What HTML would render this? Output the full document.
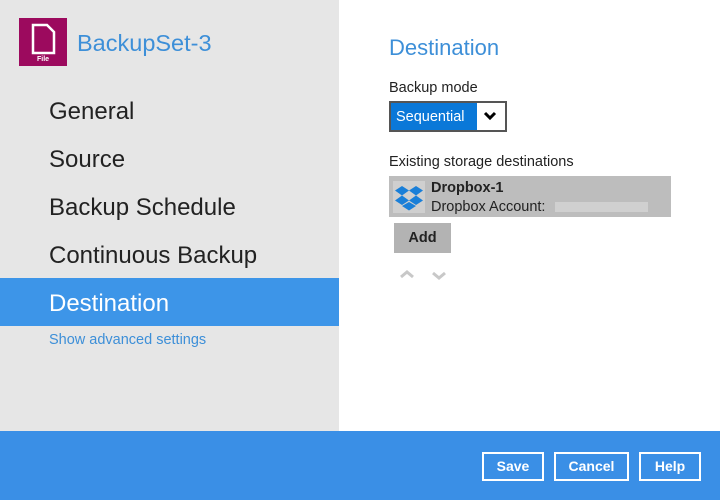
<!DOCTYPE html>
<html><head><style>
*{margin:0;padding:0;box-sizing:border-box}
body{width:720px;height:500px;position:relative;overflow:hidden;font-family:"Liberation Sans",sans-serif;background:#fff}
.left{position:absolute;left:0;top:0;width:339px;height:431px;background:#e6e6e6}
.abs{position:absolute;white-space:nowrap}
.nav{position:absolute;left:49px;font-size:24px;color:#222;line-height:48px}
.bar{position:absolute;left:0;top:431px;width:720px;height:69px;background:#3a8fe6}
.btn{position:absolute;top:452px;height:29px;border:2px solid #fff;color:#fff;font-size:14px;font-weight:bold;text-align:center;line-height:25px}
.t{font-size:14.5px;color:#222}
</style></head><body>
<div class="left"></div>
<div class="abs" style="left:19px;top:18px;width:48px;height:48px;background:#9c0a5e">
<svg width="48" height="48"><path d="M14 7h14l7 7v21H14z" fill="none" stroke="#fff" stroke-width="2.5"/><text x="24" y="43" font-size="7" fill="#fff" text-anchor="middle" font-family="Liberation Sans" font-weight="bold">File</text></svg></div>
<div class="abs" style="left:77px;top:30px;font-size:23.5px;color:#3d8fd8">BackupSet-3</div>
<div class="nav" style="top:88px">General</div>
<div class="nav" style="top:136px">Source</div>
<div class="nav" style="top:184px">Backup Schedule</div>
<div class="nav" style="top:232px">Continuous Backup</div>
<div class="abs" style="left:0;top:278px;width:339px;height:48px;background:#3d95e8"></div>
<div class="nav" style="top:280px;color:#fff">Destination</div>
<div class="abs" style="left:49px;top:332px;font-size:14.5px;color:#3d8fd8">Show advanced settings</div>
<div class="abs" style="left:389px;top:35px;font-size:22px;color:#3d8fd8">Destination</div>
<div class="abs t" style="left:389px;top:80px">Backup mode</div>
<div class="abs" style="left:389px;top:101px;width:118px;height:31px;border:2px solid #555;background:#fff"></div>
<div class="abs" style="left:391px;top:103px;width:86px;height:27px;background:#0a78d8;color:#fff;font-size:14.5px;line-height:28px;padding-left:5px">Sequential</div>
<svg class="abs" style="left:483px;top:110px" width="14" height="12"><path d="M2 3l5 5 5-5" fill="none" stroke="#000" stroke-width="3"/></svg>
<div class="abs t" style="left:389px;top:154px">Existing storage destinations</div>
<div class="abs" style="left:389px;top:176px;width:282px;height:41px;background:#bdbdbd"></div>
<div class="abs" style="left:393px;top:181px;width:32px;height:32px;background:#cfcfcf">
<svg width="32" height="32"><path d="M9 5l7 4.5-7 5-7-5zM23 5l7 4.5-7 5-7-5zM9 14.5l7 5-7 4.5-7-4.5zM23 14.5l7 5-7 4.5-7-4.5zM9 25l7-4 7 4-7 4.5z" fill="#1a7fd8"/></svg></div>
<div class="abs" style="left:431px;top:180px;font-size:14.5px;font-weight:bold;color:#222">Dropbox-1</div>
<div class="abs t" style="left:431px;top:199px">Dropbox Account:</div>
<div class="abs" style="left:555px;top:202px;width:93px;height:10px;background:#d0d0d0"></div>
<div class="abs" style="left:394px;top:223px;width:57px;height:30px;background:#b3b3b3;font-size:14.5px;font-weight:bold;color:#222;text-align:center;line-height:31px">Add</div>
<svg class="abs" style="left:399px;top:268px" width="50" height="14"><path d="M2 9l6-5 6 5" fill="none" stroke="#c8c8c8" stroke-width="3"/><path d="M34 5l6 5 6-5" fill="none" stroke="#c8c8c8" stroke-width="3"/></svg>
<div class="bar"></div>
<div class="btn" style="left:482px;width:62px">Save</div>
<div class="btn" style="left:554px;width:75px">Cancel</div>
<div class="btn" style="left:639px;width:62px">Help</div>
</body></html>
